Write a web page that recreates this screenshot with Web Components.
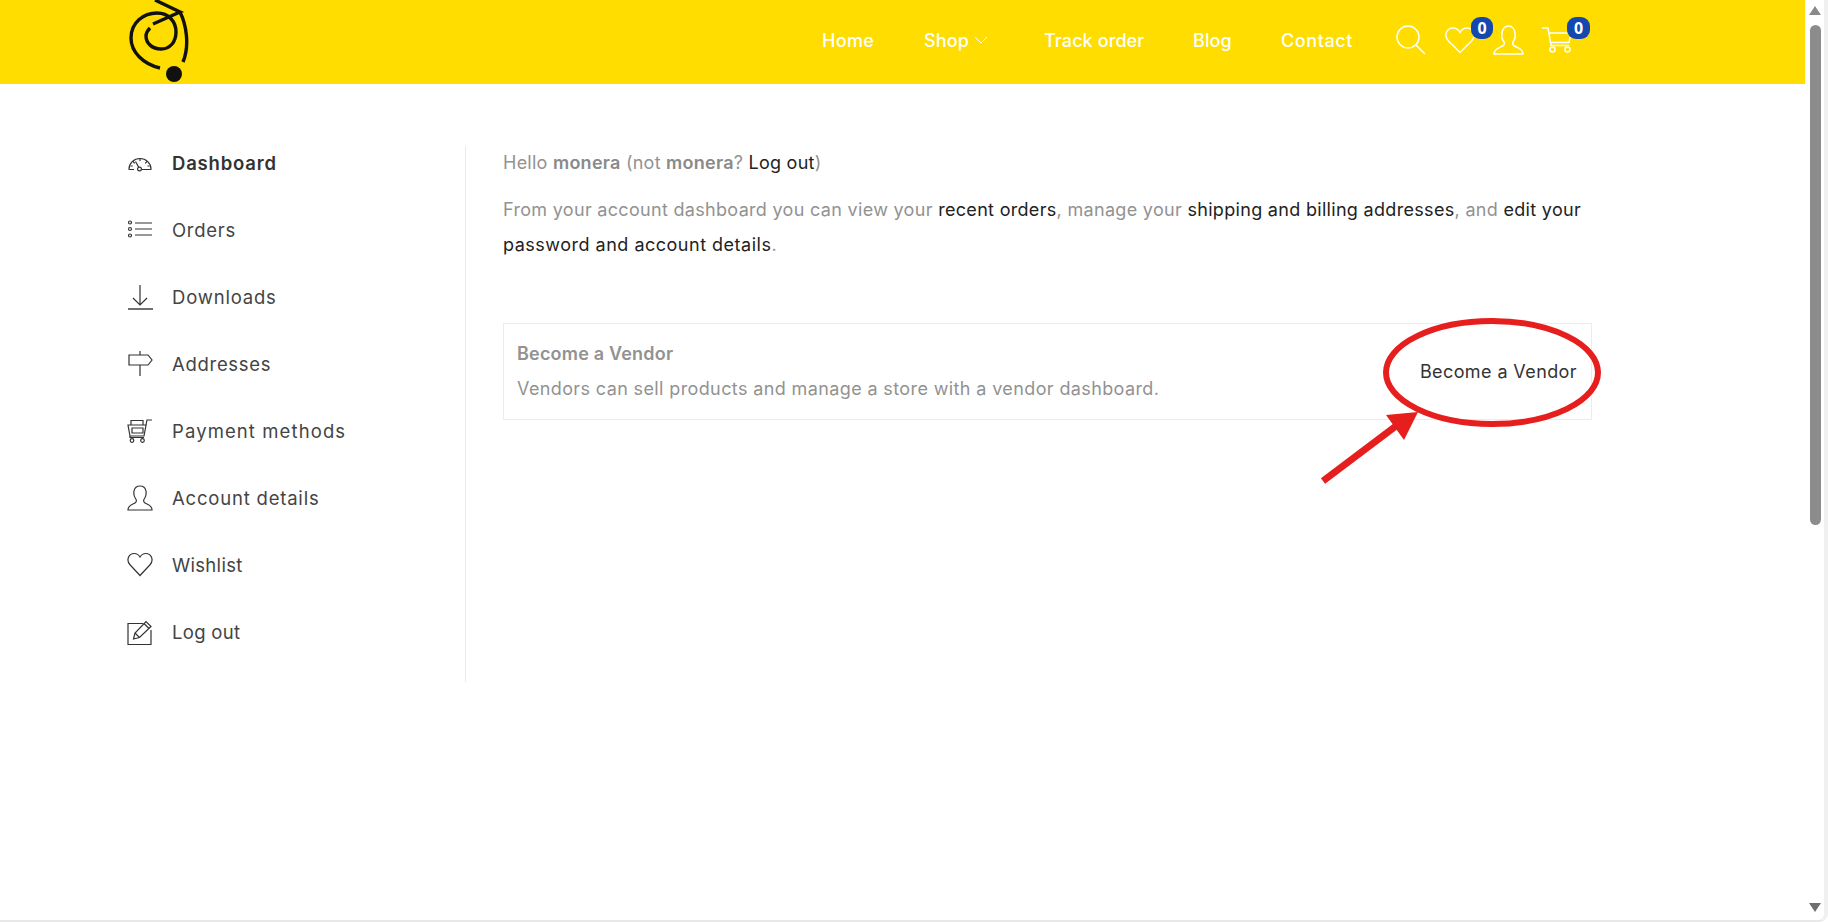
<!DOCTYPE html>
<html lang="en">
<head>
<meta charset="utf-8">
<title>My account</title>
<style>
  html, body { margin: 0; height: 922px; overflow: hidden; background: #fff; }
  body { font-family: Inter, "Open Sans", sans-serif; }
  account-main strong { font-weight: 600; color: #8a8a8a; }
  account-main a { color: #222; }
</style>
</head>
<body>
<app-shell>
  <site-header></site-header>
  <account-page>
    <account-nav>
      <nav-row icon="dashboard" active>Dashboard</nav-row>
      <nav-row icon="orders" style="letter-spacing:.7px">Orders</nav-row>
      <nav-row icon="downloads">Downloads</nav-row>
      <nav-row icon="addresses" style="letter-spacing:.7px">Addresses</nav-row>
      <nav-row icon="payment" style="letter-spacing:1.1px">Payment methods</nav-row>
      <nav-row icon="account">Account details</nav-row>
      <nav-row icon="wishlist" style="letter-spacing:.3px">Wishlist</nav-row>
      <nav-row icon="logout" style="letter-spacing:.3px">Log out</nav-row>
    </account-nav>
    <account-main>
      <p class="hello">Hello <strong>monera</strong> (not <strong>monera</strong>? <a>Log out</a>)</p>
      <p class="intro">From your account dashboard you can view your <a>recent orders</a>, manage your <a>shipping and billing addresses</a>, and <a>edit your</a> <a style="letter-spacing:.5px">password and account details</a>.</p>
      <vendor-card></vendor-card>
    </account-main>
  </account-page>
</app-shell>

<script>
const ICONS = {
  dashboard: '<path d="M1.5 19.500h5.500M15 19.500h9.500"/><path d="M2 19a11 10.500 0 0 1 22 0"/><path d="M13 8.500v2.500M6 11.500l1.800 1.800M20 11.500l-1.800 1.800M3.500 16h2.200M20.500 16h2"/><path d="M8.500 11.500l3.200 5.800"/><circle cx="12.500" cy="19" r="1.900"/>',
  orders: '<path d="M8 6h17M8 12h17M8 18h17"/><circle cx="3" cy="5.500" r="1.500"/><circle cx="3" cy="12" r="1.500"/><circle cx="3" cy="18.500" r="1.500"/>',
  downloads: '<path d="M13 1v20M6 14l7 7 7-7"/><path d="M1 25h25" stroke-width="1.400"/>',
  addresses: '<path d="M13 0v4M2 4h19l4 5-4 5H2zM13 14v11"/>',
  payment: '<path d="M1 7h18l-2 11H3z"/><path d="M19 7l1-5h5"/><path d="M4 7V2.500h12V7"/><path d="M5 10h11v5H5z"/><path d="M3 18v1.500h14"/><circle cx="5" cy="22.500" r="1.800"/><circle cx="15.500" cy="22.500" r="1.800"/>',
  account: '<path d="M1 25c0-5 4-5 7-7 2-1.300 1.500-3.200.5-4.500C7 11.500 6.500 9 7 6c.7-3.500 3-5 6-5s5.300 1.500 6 5c.5 3-.2 5.500-1.500 7.500-1 1.300-1.500 3.200.5 4.500 3 2 7 2 7 7z"/>',
  wishlist: '<path d="M13 23.500 3.200 13C-1.500 7.800 2 1.500 7.300 1.500c2.500 0 4.400 1.400 5.700 3.500 1.300-2.100 3.200-3.500 5.700-3.500C24 1.500 27.500 7.800 22.800 13z"/>',
  logout: '<path d="M16 4.500H1v21h23V11"/><path d="M6.500 20l1.500-6L19 2.500l5 5L12.500 18.500z"/><path d="M8 14l4.500 4.500M17 4.500l5 5"/>'
};

class AppShell extends HTMLElement {
  constructor() {
    super();
    this.attachShadow({ mode: 'open' }).innerHTML = `
      <style>
        :host { display: flex; position: relative; width: 1828px; height: 922px; overflow: hidden; }
        .page { flex: 0 0 1805px; }
        .frame { position: absolute; inset: 0; box-sizing: border-box; border-right: 4px solid #f0f0f0; border-bottom: 2px solid #e8e8e8; border-bottom-right-radius: 9px; pointer-events: none; }
      </style>
      <div class="page"><slot></slot></div>
      <page-scrollbar></page-scrollbar>
      <red-callout></red-callout>
      <div class="frame"></div>
    `;
  }
}

class PageScrollbar extends HTMLElement {
  constructor() {
    super();
    this.attachShadow({ mode: 'open' }).innerHTML = `
      <style>
        :host { display: flex; flex-direction: column; align-items: center; flex: 0 0 19px; height: 922px; box-sizing: border-box; padding: 6px 4px 10px 4px; }
        .up, .down { width: 0; height: 0; border-left: 6.500px solid transparent; border-right: 6.500px solid transparent; }
        .up { border-bottom: 9px solid #8a8a8a; }
        .down { border-top: 9px solid #6e6e6e; }
        .thumb { width: 11px; height: 500px; margin-top: 10px; border-radius: 6px; background: #8c8c8c; }
        .space { flex: 1; }
      </style>
      <div class="up"></div>
      <div class="thumb"></div>
      <div class="space"></div>
      <div class="down"></div>
    `;
  }
}

class SiteHeader extends HTMLElement {
  constructor() {
    super();
    this.attachShadow({ mode: 'open' }).innerHTML = `
      <style>
        :host { display: flex; justify-content: space-between; box-sizing: border-box; height: 84px; padding: 0 213px 0 125px; background: #ffdd00; }
        svg { display: block; }
        nav { display: grid; grid-template-columns: 102px 120px 149px 88px 115px 49px 48px 49px 50px; align-items: center; height: 80px; color: #fff; font-size: 18px; font-weight: 500; letter-spacing: .1px; }
        nav a { display: flex; align-items: center; gap: 5px; }
        .icon { position: relative; display: block; }
        .icon svg { fill: none; stroke: #fff; stroke-width: 1.500; }
        .badge { position: absolute; display: grid; place-items: center; height: 22px; border-radius: 9px; background: #1447b0; color: #fff; font: 700 16px "Open Sans", sans-serif; letter-spacing: 0; }
      </style>
      <svg width="70" height="84" viewBox="125 0 70 84" fill="none" stroke="#111" stroke-width="3.400">
        <path d="M160 68C143 64 131 52 131 38 131 22 144 13 157 13 169 13 176 22 176 32 176 42 170 49 161 49 152 49 146 43 146 36 146 33 148 30 150 28"/>
        <path d="M153 24 180 12 155 0M180 12C186 24 190 45 183 62"/>
        <circle cx="174" cy="74" r="8" fill="#111" stroke="none"/>
      </svg>
      <nav>
        <a style="letter-spacing:.3px">Home</a>
        <a>Shop <svg width="14" height="8" viewBox="0 0 14 8" fill="none" stroke="#fff"><path d="M1 1l6 6 6-6"/></svg></a>
        <a>Track order</a>
        <a>Blog</a>
        <a style="letter-spacing:.6px">Contact</a>
        <a class="icon"><svg width="30" height="30" viewBox="0 0 30 30"><circle cx="12" cy="12" r="11"/><path d="M20 20l9 9"/></svg></a>
        <a class="icon"><svg width="30" height="27" viewBox="0 0 30 27"><path d="M15 25.500 3.500 14C-2 8 2 1 8 1c3 0 5.500 1.800 7 4.500C16.500 2.800 19 1 22 1c6 0 10 7 4.500 13z"/></svg><span class="badge" style="left:26px;top:-10px;width:22px">0</span></a>
        <a class="icon"><svg width="31" height="30" viewBox="0 0 31 30"><path d="M1 29c0-5 5-6 8.500-8 2.500-1.500 2-3.500 1-5-1.500-2-2-5-1.500-8 .6-4 3-7 6.500-7s6 3 6.500 7c.5 3 0 6-1.500 8-1 1.500-1.500 3.500 1 5 3.500 2 8.500 3 8.500 8z"/></svg></a>
        <a class="icon"><svg width="30" height="26" viewBox="0 0 30 26"><path d="M0 1h6l3 17.500h18M7 6h22l-2 9.500H8.500"/><circle cx="10.500" cy="22.500" r="2.500"/><circle cx="25.500" cy="22.500" r="2.500"/></svg><span class="badge" style="left:25px;top:-10px;width:23px">0</span></a>
      </nav>
    `;
  }
}

class AccountPage extends HTMLElement {
  constructor() {
    super();
    this.attachShadow({ mode: 'open' }).innerHTML = `
      <style>
        :host { display: flex; align-items: flex-start; padding: 62px 213px 0 125px; }
      </style>
      <slot></slot>
    `;
  }
}

class AccountNav extends HTMLElement {
  constructor() {
    super();
    this.attachShadow({ mode: 'open' }).innerHTML = `
      <style>
        :host { display: flex; flex-direction: column; flex: 0 0 340px; box-sizing: content-box; height: 536px; border-right: 1px solid #eaeaea; }
      </style>
      <slot></slot>
    `;
  }
}

class NavRow extends HTMLElement {
  constructor() {
    super();
    this.attachShadow({ mode: 'open' });
  }

  connectedCallback() {
    const active = this.hasAttribute('active');
    this.shadowRoot.innerHTML = `
      <style>
        :host { display: flex; align-items: center; gap: 19px; height: 34px; margin-bottom: 33px; padding-left: 2px; color: ${active ? '#333' : '#444'}; font-size: 18.500px; font-weight: ${active ? 600 : 400}; letter-spacing: .8px; }
        svg { flex: none; fill: none; stroke: #333; stroke-width: 1.200; }
      </style>
      <svg width="26" height="26" viewBox="0 0 26 26">${ICONS[this.getAttribute('icon')]}</svg>
      <span><slot></slot></span>
    `;
  }
}

class AccountMain extends HTMLElement {
  constructor() {
    super();
    this.attachShadow({ mode: 'open' }).innerHTML = `
      <style>
        :host { display: block; flex: 1; margin: -1px 0 0 37px; color: #929292; font-size: 18px; line-height: 35px; }
        ::slotted(p) { margin: 0; }
        ::slotted(.hello) { margin-bottom: 12px; letter-spacing: .25px; }
        ::slotted(.intro) { margin-bottom: 61px; letter-spacing: .31px; }
      </style>
      <slot></slot>
    `;
  }
}

class VendorCard extends HTMLElement {
  constructor() {
    super();
    this.attachShadow({ mode: 'open' }).innerHTML = `
      <style>
        :host { display: flex; justify-content: space-between; align-items: center; box-sizing: border-box; height: 97px; padding: 0 14px 1px 13px; border: 1px solid #ececec; }
        h3 { margin: 0; font-size: 18px; font-weight: 600; color: #929292; letter-spacing: .2px; }
        p { margin: 0; letter-spacing: .38px; }
        a { color: #333; letter-spacing: .4px; }
      </style>
      <div>
        <h3>Become a Vendor</h3>
        <p>Vendors can sell products and manage a store with a vendor dashboard.</p>
      </div>
      <a>Become a Vendor</a>
    `;
  }
}

class RedCallout extends HTMLElement {
  constructor() {
    super();
    this.attachShadow({ mode: 'open' }).innerHTML = `
      <style>
        :host { position: absolute; left: 0; top: 0; pointer-events: none; }
        svg { display: block; }
      </style>
      <svg width="1828" height="922" viewBox="0 0 1828 922" fill="none">
        <ellipse cx="1492" cy="372.500" rx="106" ry="51.500" stroke="#e61e1e" stroke-width="6"/>
        <path d="M1323 481 1396 426" stroke="#e61e1e" stroke-width="7"/>
        <path d="M1418 412 1386 415 1404 440z" fill="#e61e1e"/>
      </svg>
    `;
  }
}

customElements.define('app-shell', AppShell);
customElements.define('page-scrollbar', PageScrollbar);
customElements.define('site-header', SiteHeader);
customElements.define('account-page', AccountPage);
customElements.define('account-nav', AccountNav);
customElements.define('nav-row', NavRow);
customElements.define('account-main', AccountMain);
customElements.define('vendor-card', VendorCard);
customElements.define('red-callout', RedCallout);
</script>
</body>
</html>
